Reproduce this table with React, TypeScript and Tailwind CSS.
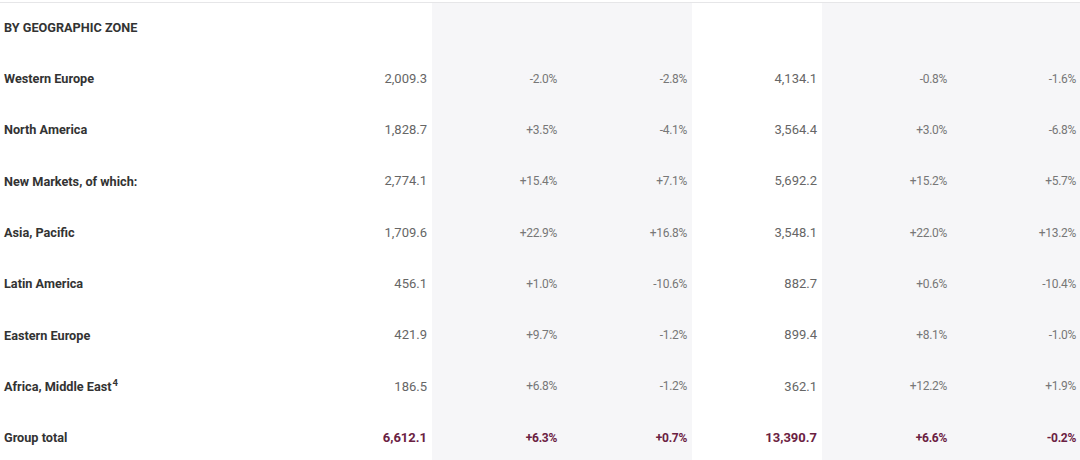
import React from "react";

type Row = { label: React.ReactNode; v: string[]; total?: boolean };

const rows: Row[] = [
  { label: "Western Europe", v: ["2,009.3", "-2.0%", "-2.8%", "4,134.1", "-0.8%", "-1.6%"] },
  { label: "North America", v: ["1,828.7", "+3.5%", "-4.1%", "3,564.4", "+3.0%", "-6.8%"] },
  { label: "New Markets, of which:", v: ["2,774.1", "+15.4%", "+7.1%", "5,692.2", "+15.2%", "+5.7%"] },
  { label: "Asia, Pacific", v: ["1,709.6", "+22.9%", "+16.8%", "3,548.1", "+22.0%", "+13.2%"] },
  { label: "Latin America", v: ["456.1", "+1.0%", "-10.6%", "882.7", "+0.6%", "-10.4%"] },
  { label: "Eastern Europe", v: ["421.9", "+9.7%", "-1.2%", "899.4", "+8.1%", "-1.0%"] },
  {
    label: (
      <>
        Africa, Middle East<sup className="text-[9.5px] font-bold ml-[1px]">4</sup>
      </>
    ),
    v: ["186.5", "+6.8%", "-1.2%", "362.1", "+12.2%", "+1.9%"],
  },
  { label: "Group total", v: ["6,612.1", "+6.3%", "+0.7%", "13,390.7", "+6.6%", "-0.2%"], total: true },
];

const shaded = [false, true, true, false, true, true];

export default function App() {
  return (
    <div
      className="w-[1080px] h-[460px] overflow-hidden bg-white"
      style={{ fontFamily: "Roboto, 'Liberation Sans', sans-serif" }}
    >
      <div className="h-[2px] bg-white" />
      <div className="h-[1px] bg-[#e6e6e8]" />
      <div className="grid grid-cols-[302px_130px_130px_130px_130px_130px_128px]">
        {/* header row */}
        <div className="h-[50px] flex items-center pl-[4px] text-[12.7px] font-bold text-[#333]">
          BY GEOGRAPHIC ZONE
        </div>
        {shaded.map((s, i) => (
          <div key={i} className={s ? "h-[50px] bg-[#f6f6f8]" : "h-[50px] bg-white"} />
        ))}
        {rows.map((r, ri) => (
          <React.Fragment key={ri}>
            <div className="h-[51.3px] flex items-center pl-[4px] text-[12.7px] font-bold text-[#333]">
              <span>{r.label}</span>
            </div>
            {r.v.map((val, ci) => {
              const isNum = ci === 0 || ci === 3;
              const bg = shaded[ci] ? "bg-[#f6f6f8]" : "bg-white";
              const size = isNum ? "text-[13px]" : "text-[12px] tracking-[-0.3px]";
              const color = r.total ? "text-[#6b2142] font-bold" : isNum ? "text-[#666]" : "text-[#777]";
              return (
                <div
                  key={ci}
                  className={`h-[51.3px] flex items-center justify-end ${ci === 5 ? "pr-[4px]" : "pr-[5px]"} ${bg} ${size} ${color}`}
                >
                  {val}
                </div>
              );
            })}
          </React.Fragment>
        ))}
      </div>
    </div>
  );
}
